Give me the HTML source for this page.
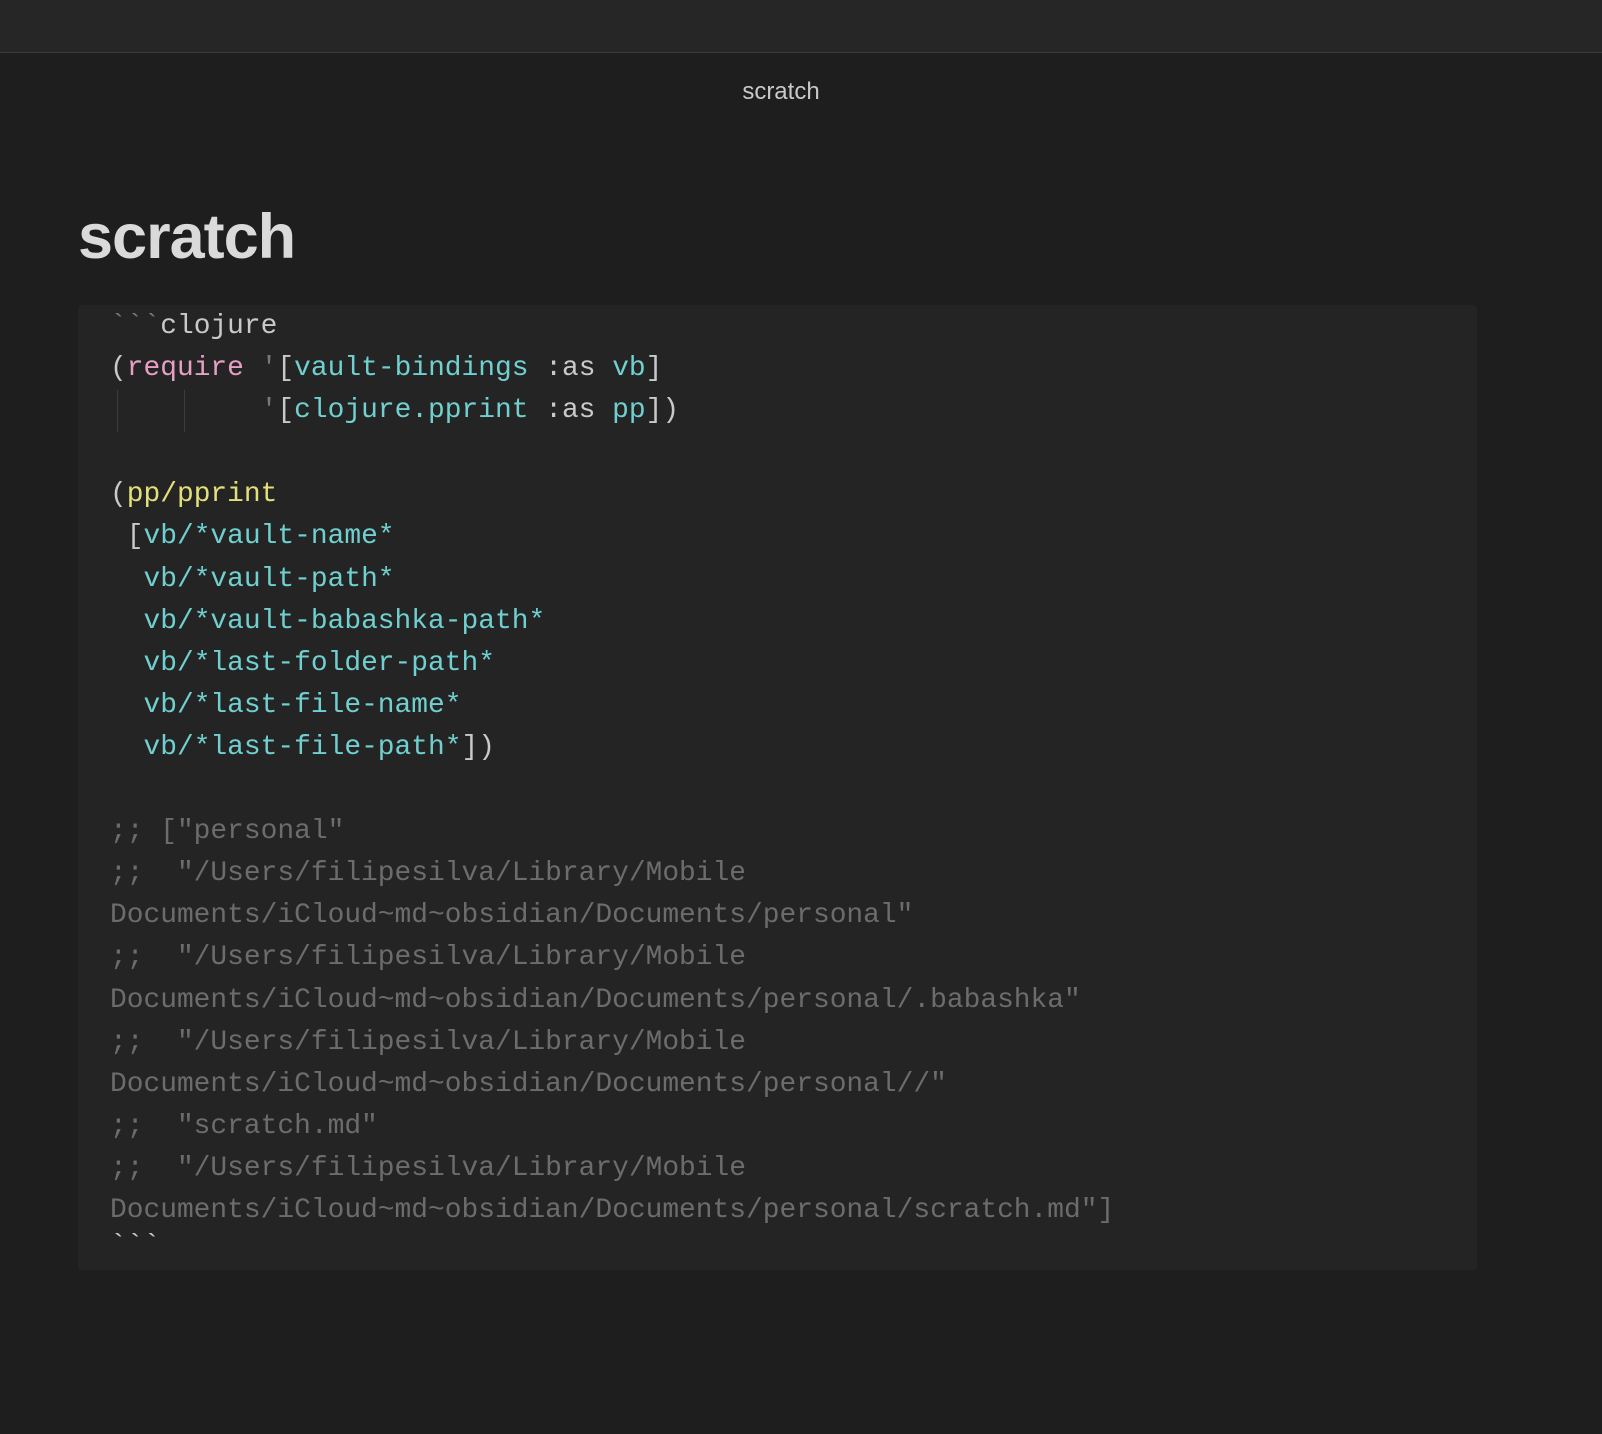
<!DOCTYPE html>
<html><head><style>
html,body{margin:0;padding:0;background:#1e1e1e;width:1602px;height:1434px;overflow:hidden}
.top{position:absolute;left:0;top:0;width:1602px;height:52px;background:#262626;border-bottom:1px solid #3a3a3a}
.t{position:absolute;top:78px;left:0;width:1562px;text-align:center;color:#c8c8c8;font:24px "Liberation Sans",sans-serif}
h1{position:absolute;left:78px;top:201px;margin:0;color:#dadada;font:bold 63px "Liberation Sans",sans-serif;letter-spacing:-1px}
.code{position:absolute;left:78px;top:305px;width:1399px;height:965px;background:#242424;border-radius:4px;z-index:1}
.src{position:absolute;left:110px;top:306px;margin:0;white-space:pre;font-family:"Liberation Mono","DejaVu Sans Mono",monospace;font-size:27.9px;line-height:42.1px;color:#c9c9c9;z-index:3}
.p{color:#e79fc6}.c{color:#6fd0cf}.y{color:#e3e07a}.g{color:#6c6c6c}.q{color:#777}
.bar{position:absolute;width:1px;height:42px;background:#3c3c3c;top:390px;z-index:2}
</style></head><body>
<div class="top"></div>
<div class="t">scratch</div>
<h1>scratch</h1>
<div class="code"></div>
<div class="bar" style="left:117px"></div><div class="bar" style="left:184px"></div>
<div class="src"><span class="q">&#96;&#96;&#96;</span>clojure
(<span class="p">require</span> <span class="q">'</span>[<span class="c">vault-bindings</span> :as <span class="c">vb</span>]
         <span class="q">'</span>[<span class="c">clojure.pprint</span> :as <span class="c">pp</span>])

(<span class="y">pp/pprint</span>
 [<span class="c">vb/*vault-name*</span>
  <span class="c">vb/*vault-path*</span>
  <span class="c">vb/*vault-babashka-path*</span>
  <span class="c">vb/*last-folder-path*</span>
  <span class="c">vb/*last-file-name*</span>
  <span class="c">vb/*last-file-path*</span>])

<span class="g">;; ["personal"
;;  "/Users/filipesilva/Library/Mobile
Documents/iCloud~md~obsidian/Documents/personal"
;;  "/Users/filipesilva/Library/Mobile
Documents/iCloud~md~obsidian/Documents/personal/.babashka"
;;  "/Users/filipesilva/Library/Mobile
Documents/iCloud~md~obsidian/Documents/personal//"
;;  "scratch.md"
;;  "/Users/filipesilva/Library/Mobile
Documents/iCloud~md~obsidian/Documents/personal/scratch.md"]</span>
<span style="position:relative;top:-6px">&#96;&#96;&#96;</span></div>
</body></html>
